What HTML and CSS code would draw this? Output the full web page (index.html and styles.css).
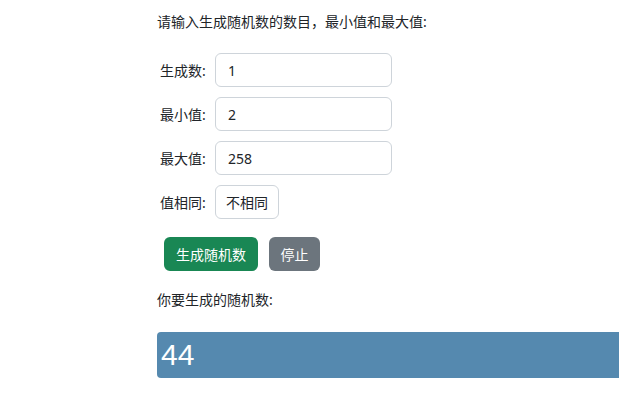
FILE: index.html
```
<!doctype html>
<html lang="zh-CN">
    <head>
        <meta charset="UTF-8" />
        <meta name="viewport" content="width=device-width, initial-scale=1.0" />
        <title>随机数生成</title>
        <link rel="stylesheet" href="styles.css">
    </head>
    <body>
        <div class="container">
            <p class="intro">请输入生成随机数的数目，最小值和最大值:</p>

            <div class="fields">
                <div class="field">
                    <label for="count">生成数:</label>
                    <input type="text" id="count" class="form-control" value="1" />
                </div>
                <div class="field">
                    <label for="min">最小值:</label>
                    <input type="text" id="min" class="form-control" value="2" />
                </div>
                <div class="field">
                    <label for="max">最大值:</label>
                    <input type="text" id="max" class="form-control" value="258" />
                </div>
                <div class="field">
                    <label>值相同:</label>
                    <button class="toggle">不相同</button>
                </div>
            </div>

            <!-- Actions -->
            <div class="actions">
                <button class="btn btn-success">生成随机数</button>
                <button class="btn btn-secondary">停止</button>
            </div>

            <p class="result-label">你要生成的随机数:</p>
            <div class="result">44</div>
        </div>
    </body>
</html>
```

FILE: styles.css
```
body {
    margin: 0;
    font-family: "Noto Sans", "Noto Sans CJK SC", sans-serif;
    font-size: 14px;
    line-height: 21px;
    color: #212529;
    background: #fff;
    overflow: hidden;
}

.container {
    display: flex;
    flex-direction: column;
    align-items: flex-start;
    padding: 11px 0 0 157px;
}

.intro {
    margin: 0 0 21px;
}

.fields {
    display: flex;
    flex-direction: column;
    gap: 10px;
}

.field {
    display: flex;
    align-items: center;
    height: 34px;
}

.field label {
    width: 58px;
    padding-left: 3px;
    box-sizing: border-box;
}

.form-control,
.toggle {
    height: 34px;
    box-sizing: border-box;
    border: 1px solid #ced4da;
    border-radius: 6px;
    background: #fff;
    font-family: inherit;
    font-size: 14px;
    color: #212529;
}

.form-control {
    width: 177px;
    padding: 0 12px;
}

.toggle {
    width: 64px;
    padding: 0 10px;
}

.actions {
    display: flex;
    gap: 11px;
    margin-top: 18px;
    padding-left: 7px;
}

.btn {
    height: 34px;
    padding: 0 12px;
    border: none;
    border-radius: 6px;
    color: #fff;
    font-family: inherit;
    font-size: 14px;
    cursor: pointer;
}

.btn-success {
    background: #198754;
}

.btn-secondary {
    width: 51px;
    padding: 0;
    background: #6c757d;
}

.result-label {
    margin: 18px 0 22px;
}

/* bar runs on past the right edge of the window */
.result {
    align-self: stretch;
    height: 46px;
    padding-left: 4px;
    border-radius: 4px 0 0 4px;
    background: #5589af;
    color: #fff;
    font-family: "Liberation Sans", Arial, sans-serif;
    font-size: 30px;
    line-height: 46px;
}
```
